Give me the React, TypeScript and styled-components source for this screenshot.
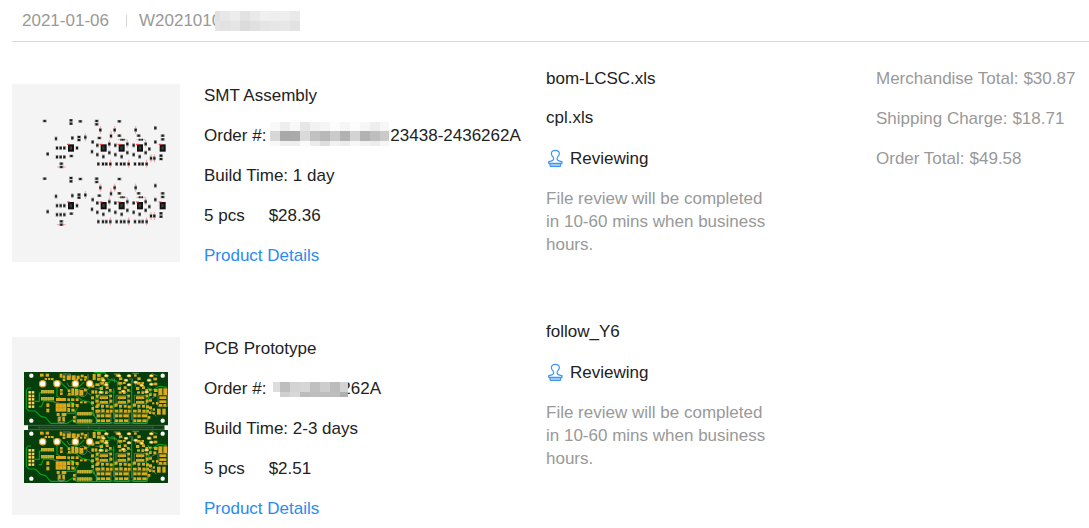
import React from "react";
import styled, { createGlobalStyle } from "styled-components";

const GlobalStyle = createGlobalStyle`
  * { box-sizing: border-box; }
  body {
    margin: 0;
    background: #fff;
    color: #222;
    font: 17px/20px "Liberation Sans", Arial, sans-serif;
  }
  h2, p, ul, dl, dd { margin: 0; padding: 0; font: inherit; }
`;

const Page = styled.main`
  padding-left: 12px;
`;

const OrderHeader = styled.header`
  display: flex;
  align-items: center;
  gap: 12px;
  height: 42px;
  padding: 1px 0 0 10px;
  border-bottom: 1px solid #d8d8de;
  color: #999;
`;

const OrderDate = styled.time`
  min-width: 92px;
`;

const Divider = styled.span`
  width: 1px;
  height: 12px;
  background: #d4d4d4;
`;

const Items = styled.div`
  display: flex;
  flex-direction: column;
  gap: 56px;
  padding-top: 27px;
`;

const Item = styled.article`
  display: grid;
  grid-template-columns: minmax(0, 534fr) minmax(0, 330fr) minmax(0, 213fr);
`;

const ItemMain = styled.div`
  display: flex;
  gap: 24px;
`;

const Thumb = styled.div`
  flex: none;
  width: 168px;
  height: 178px;
  margin-top: 15px;
  background: #f4f4f4;

  svg { display: block; }
`;

const Details = styled.div`
  display: flex;
  flex-direction: column;
  align-items: flex-start;
  gap: 20px;
  padding-top: 17px;
  white-space: nowrap;
`;

const OrderNumber = styled.p`
  display: flex;
  align-items: center;
  height: 20px;
`;

const Quantity = styled.p`
  display: flex;
  gap: 24px;
`;

const DetailLink = styled.a`
  color: #2a8bf0;
  text-decoration: none;
`;

const Files = styled.ul`
  display: flex;
  flex-direction: column;
  gap: 19px;
  list-style: none;
`;

const Status = styled.p`
  display: flex;
  align-items: center;
  gap: 4px;
  margin-top: 21px;
`;

const Note = styled.p`
  max-width: 230px;
  margin-top: 18px;
  color: #999;
  line-height: 23px;
`;

const Totals = styled.dl`
  display: flex;
  flex-direction: column;
  gap: 20px;
  color: #999;
  white-space: nowrap;
`;

const TotalLine = styled.div`
  display: flex;
  gap: 5px;
`;

const Redacted = styled.svg<{ $before: number; $after: number; $align: string }>`
  flex: none;
  position: relative;
  align-self: ${(p) => p.$align};
  margin-left: ${(p) => p.$before}px;
  margin-right: ${(p) => p.$after}px;
`;

type MosaicProps = {
  cols: number[];
  rows: number[];
  shades: number[][];
  before?: number;
  after?: number;
  align?: string;
};

function Mosaic({ cols, rows, shades, before = 0, after = 0, align = "center" }: MosaicProps) {
  const start = (list: number[], i: number) => list.slice(0, i).reduce((a, b) => a + b, 0);
  const width = start(cols, cols.length);
  const height = start(rows, rows.length);
  return (
    <Redacted
      $before={before}
      $after={after}
      $align={align}
      width={width}
      height={height}
      shapeRendering="crispEdges"
      aria-hidden="true"
    >
      {shades.map((line, r) =>
        line.map((v, c) =>
          v < 0 ? null : (
            <rect key={`${r}-${c}`} x={start(cols, c)} y={start(rows, r)} width={cols[c]} height={rows[r]} fill={`rgb(${v},${v},${v})`} />
          ),
        ),
      )}
    </Redacted>
  );
}

const tens = (n: number) => Array<number>(n).fill(10);

function StampIcon() {
  return (
    <svg width="20" height="20" viewBox="-6 -2 60 60" fill="none" stroke="#3d96f3" strokeWidth="3.6" strokeLinejoin="round" aria-hidden="true">
      <path d="M17 27C17 21 10 19 10 12C10 6 15 2 22 2S34 6 34 12C34 19 27 21 27 27C27 34 34 34 42 36V41H2V36C10 34 17 34 17 27Z" />
      <path d="M5 42L7 50H37L39 42Z" fill="#b9dafb" />
    </svg>
  );
}

type Point = [number, number];
type Box = [number, number, number, number];

const flatParts: Point[] = [
  [134, 153], [213, 151], [213, 161], [241, 154], [290, 153], [290, 163], [358, 154], [298, 204], [358, 197],
  [416, 197], [214, 258], [237, 201], [237, 210], [488, 197], [488, 208], [483, 257], [483, 267], [184, 281], [184, 291],
];
const tallParts: Point[] = [
  [301, 180], [344, 180], [407, 180], [466, 174], [168, 206], [217, 204], [256, 202], [333, 198], [278, 216],
  [466, 216], [171, 234], [182, 234], [193, 234], [231, 234], [292, 226], [328, 222], [346, 226], [382, 222],
  [401, 226], [437, 222], [448, 237], [276, 245], [143, 252], [171, 261], [182, 261], [193, 261], [292, 254],
  [328, 248], [346, 254], [382, 248], [401, 254], [437, 248], [310, 260], [365, 260], [419, 260], [295, 282],
  [309, 282], [319, 282], [331, 282], [350, 282], [363, 282], [373, 282], [386, 282], [405, 282], [418, 282],
  [428, 282], [440, 282], [453, 265], [463, 265],
];
const chips: Point[] = [[213, 234], [311, 234], [365, 234], [420, 234], [488, 234]];
const redTall: Point[] = [
  [301, 180], [344, 180], [407, 180], [256, 202], [333, 195], [328, 221], [382, 221], [437, 221], [331, 281],
  [386, 281], [440, 281], [453, 265], [463, 265],
];
const redFlat: Point[] = [[184, 291], [367, 209], [422, 209]];

function AssemblyHalf() {
  return (
    <g>
      {redTall.map(([x, y]) => (
        <path key={`${x}${y}`} d={`M${x} ${y - 12}V${y + 12}`} stroke="#ff8b8b" strokeWidth="2.4" />
      ))}
      {redFlat.map(([x, y]) => (
        <path key={`${x}${y}`} d={`M${x - 13} ${y}H${x + 13}`} stroke="#ff8b8b" strokeWidth="2.4" />
      ))}
      {flatParts.map(([x, y]) => (
        <g key={`${x}${y}`}>
          <rect x={x - 6} y={y - 4} width="12" height="8" fill="#8a8a8a" />
          <rect x={x - 3} y={y - 3} width="6" height="6" fill="#191919" />
        </g>
      ))}
      {tallParts.map(([x, y]) => (
        <g key={`${x}${y}`}>
          <rect x={x - 4} y={y - 6} width="8" height="12" fill="#8a8a8a" />
          <rect x={x - 3} y={y - 3} width="6" height="6" fill="#191919" />
        </g>
      ))}
      {redFlat.slice(1).map(([x, y]) => (
        <path key={x} d={`M${x - 6} ${y}h4M${x - 1} ${y}h3M${x + 3} ${y}h4`} stroke="#222" strokeWidth="6" />
      ))}
      {chips.map(([x, y]) => (
        <g key={x}>
          <rect x={x - 9} y={y - 11} width="18" height="22" fill="#111" />
          <rect x={x - 4} y={y - 5} width="7" height="10" fill="#3b3b3b" />
          <path d={`M${x - 12} ${y - 11}h9`} stroke="#ff3434" strokeWidth="3" />
        </g>
      ))}
    </g>
  );
}

function AssemblyDrawing() {
  return (
    <svg width="168" height="178" viewBox="36 42 504 534" role="img" aria-label="SMT assembly preview">
      <AssemblyHalf />
      <g transform="translate(0 173)">
        <AssemblyHalf />
      </g>
    </svg>
  );
}

const pads: Box[] = [
  [120, 131, 11, 9], [137, 131, 10, 9], [179, 131, 8, 12], [188, 136, 8, 9], [188, 146, 8, 7], [200, 136, 12, 14],
  [215, 136, 12, 14], [230, 137, 9, 10], [242, 134, 9, 8], [253, 138, 8, 8], [278, 132, 9, 18], [291, 131, 11, 9],
  [291, 143, 11, 9], [134, 144, 7, 6], [144, 144, 7, 6], [153, 144, 8, 6], [228, 146, 7, 6], [240, 146, 7, 6],
  [252, 146, 7, 6], [180, 177, 8, 8], [180, 187, 8, 8], [203, 178, 8, 8], [214, 175, 8, 20], [204, 188, 8, 8],
  [224, 177, 11, 19], [238, 180, 12, 17], [252, 176, 8, 8], [139, 220, 9, 11], [139, 236, 9, 11], [168, 204, 30, 9],
  [167, 220, 32, 25], [202, 205, 8, 8], [213, 205, 10, 8], [201, 220, 10, 11], [214, 218, 8, 14], [202, 234, 8, 12],
  [214, 236, 10, 9], [227, 205, 9, 8], [227, 222, 9, 9], [170, 249, 9, 9], [185, 249, 14, 9], [175, 260, 7, 14],
  [187, 260, 7, 14], [240, 214, 8, 6], [252, 214, 8, 6], [219, 258, 8, 8], [219, 269, 8, 8], [274, 164, 9, 9],
  [274, 181, 8, 10], [284, 181, 8, 10], [273, 199, 9, 9], [273, 214, 9, 9], [274, 231, 8, 9], [286, 160, 12, 8],
  [287, 194, 8, 9], [286, 209, 10, 9], [286, 226, 10, 8], [286, 239, 10, 9], [446, 176, 9, 6], [447, 190, 8, 8],
  [460, 143, 11, 8], [461, 158, 11, 8], [462, 177, 11, 9], [460, 190, 9, 9], [447, 208, 9, 7], [456, 217, 7, 6],
  [447, 229, 9, 9], [458, 235, 7, 7], [468, 216, 7, 8], [475, 175, 12, 20], [490, 175, 12, 20], [478, 199, 21, 8],
  [478, 211, 21, 8], [477, 222, 10, 8], [490, 222, 9, 8], [471, 236, 11, 18], [487, 236, 10, 18], [447, 244, 7, 8],
  [443, 258, 8, 8], [457, 247, 8, 6],
];
const channelPads: Box[] = [
  [-8, 142, 10, 8], [-10, 156, 12, 8], [-12, 171, 10, 9], [4, 156, 8, 6], [6, 169, 9, 8], [-9, 184, 9, 7],
  [4, 184, 8, 8], [16, 177, 8, 8], [17, 194, 8, 8], [-12, 199, 25, 8], [-12, 213, 25, 8], [17, 209, 9, 9],
  [-22, 221, 10, 9], [-8, 225, 9, 8], [6, 225, 9, 8], [18, 226, 9, 9], [-21, 239, 11, 8], [-7, 238, 10, 9],
  [7, 239, 10, 9], [19, 239, 8, 9], [-20, 253, 10, 9], [-8, 253, 10, 9], [5, 253, 16, 9], [-20, 268, 9, 8],
  [-9, 268, 13, 8], [7, 268, 13, 8], [-18, 133, 8, 7],
];
const brightPads: Point[] = [
  [319, 137], [387, 137], [454, 137], [310, 151], [378, 151], [447, 151], [319, 164], [387, 164], [454, 163],
  [302, 187], [370, 184], [440, 186], [357, 137], [407, 157], [425, 166],
];
const strips: Point[] = [[123, 180], [123, 201], [232, 246], [232, 268]];

function BoardHalf() {
  return (
    <g>
      <rect x="72" y="126" width="432" height="159" fill="#063f0b" />
      <g fill="none" stroke="#05a01a" strokeWidth="3.4" strokeLinejoin="round">
        <path d="M93 174H84L79 180V236L87 243H105L123 259L137 263L152 280H202L218 270L231 281H290" />
        <path d="M104 214H118V190L128 185H161M117 230H124L131 212L164 215M163 161L159 149M178 151L190 165L204 178M171 173V199L180 204" />
        <path d="M200 196H228L247 212L269 216L280 229V251M207 215L235 229L223 250H199M253 184L266 176L276 159M252 156L239 169L224 177" />
        <path d="M281 128H315L325 149L349 153L363 170M285 209L297 195L307 169L330 155M275 244L289 267V279H437L450 263" />
        <path d="M341 175V266M395 151V270M443 171L454 190L440 213V250M326 186H345M380 177L397 188M336 230H349M390 231H403M457 181L478 169L501 172" />
      </g>
      <g fill="none" stroke="#9aad97" strokeWidth="1.5">
        <path d="M161 217H176M201 159L208 171M174 259V277H194V259M209 169H223M262 188L274 196M228 245V279M280 258L285 250M286 175H300" />
        <circle cx="184" cy="270" r="10" />
        <circle cx="248" cy="187" r="13" />
        {[0, 54, 109].map((x) => (
          <path key={x} transform={`translate(${x} 0)`} d="M298 169V159L306 151M316 181L329 190M294 196V222H330V196ZM290 249H333V280H290ZM306 224V248M333 147H344V158" />
        ))}
        <path d="M474 195V230H502V195ZM443 229L469 259M449 248H466M446 209L469 198M455 130L473 138" />
      </g>
      <path d="M189 132H211V145M264 133V151M341 132H360M397 130H417" fill="none" stroke="#a0a899" strokeWidth="2" />
      {strips.map(([x, y]) => (
        <g key={`${x}${y}`}>
          <rect x={x} y={y} width={x < 200 ? 39 : 45} height="10" fill="#a1a221" />
          {[0, 1, 2, 3, 4, 5].map((i) => (
            <rect key={i} x={x + i * 7} y={y} width="4" height="10" fill="#c6b13b" />
          ))}
        </g>
      ))}
      {pads.map(([x, y, w, h]) => (
        <rect key={`${x}-${y}`} x={x} y={y} width={w} height={h} fill="#dba91e" />
      ))}
      {[311, 365, 420].map((cx) =>
        channelPads.map(([x, y, w, h]) => (
          <rect key={`${cx}${x}-${y}`} x={cx + x} y={y} width={w} height={h} fill="#d8aa20" />
        )),
      )}
      <path d="M177 220V245M188 220V245M167 233H199M305 198V222M315 198V222M359 198V222M369 198V222M414 198V222M424 198V222" stroke="#b28b16" strokeWidth="1.5" />
      {brightPads.map(([x, y]) => (
        <g key={`${x}${y}`}>
          <ellipse cx={x} cy={y} rx="7" ry="4.5" fill="#e3b235" />
          <ellipse cx={x} cy={y} rx="4" ry="2.5" fill="#fff3bf" />
        </g>
      ))}
      {[187, 198, 208, 219, 230].map((y) => (
        <g key={y}>
          <rect x="85" y={y - 4} width="8" height="8" fill="#e2bb45" />
          <rect x="95" y={y - 4} width="8" height="8" fill="#e2bb45" />
          <path d={`M87 ${y}h4M97 ${y}h4`} stroke="#fff3bf" strokeWidth="3" />
        </g>
      ))}
      {[128, 171, 226, 269].map((x) => (
        <circle key={x} cx={x} cy="161" r="9.5" fill="#fff" stroke="#e3a329" strokeWidth="3.5" />
      ))}
      {[[94, 137], [488, 137], [94, 272], [488, 272]].map(([x, y]) => (
        <circle key={`${x}${y}`} cx={x} cy={y} r="6.5" fill="#fff" />
      ))}
    </g>
  );
}

function BoardDrawing() {
  return (
    <svg width="168" height="178" viewBox="36 21 504 534" role="img" aria-label="PCB prototype preview">
      <BoardHalf />
      <g transform="translate(0 174)">
        <BoardHalf />
      </g>
      <rect x="84" y="285" width="410" height="15" fill="#123f17" />
      <path d="M72 286H504M84 299H494" stroke="#5f7f60" strokeWidth="2" />
      <path d="M117 287V299M265 287V299M297 287V299M459 287V299M117 292H459" stroke="#527254" strokeWidth="1.5" />
      <rect x="72" y="287" width="12" height="12" fill="#fff" />
      <rect x="494" y="287" width="10" height="12" fill="#fff" />
    </svg>
  );
}

function Review({ files }: { files: string[] }) {
  return (
    <section>
      <Files>
        {files.map((file) => (
          <li key={file}>{file}</li>
        ))}
      </Files>
      <Status>
        <StampIcon />
        Reviewing
      </Status>
      <Note>File review will be completed in 10-60 mins when business hours.</Note>
    </section>
  );
}

const totals = [
  ["Merchandise Total:", "$30.87"],
  ["Shipping Charge:", "$18.71"],
  ["Order Total:", "$49.58"],
];

export default function App() {
  return (
    <>
      <GlobalStyle />
      <Page>
        <OrderHeader>
          <OrderDate dateTime="2021-01-06">2021-01-06</OrderDate>
          <Divider />
          <OrderNumber>
            W2021010
            <Mosaic
              before={-6}
              cols={[5, ...tens(8)]}
              rows={[10, 10]}
              shades={[
                [225, 231, 236, 226, 233, 239, 238, 238, 233],
                [229, 226, 229, 219, 224, 229, 230, 231, 226],
              ]}
            />
          </OrderNumber>
        </OrderHeader>
        <Items>
          <Item>
            <ItemMain>
              <Thumb>
                <AssemblyDrawing />
              </Thumb>
              <Details>
                <h2>SMT Assembly</h2>
                <OrderNumber>
                  Order #:
                  <Mosaic
                    before={4}
                    after={1}
                    align="flex-end"
                    cols={[...tens(11), 9]}
                    rows={[9, 10, 5]}
                    shades={[
                      [249, 238, 248, 230, 241, 245, 252, 246, 252, 246, 238, 247],
                      [215, 169, 170, 218, 193, 184, 202, 178, 211, 178, 190, 202],
                      [248, 239, 238, 250, 235, 222, 241, 236, 247, 241, 237, 246],
                    ]}
                  />
                  23438-2436262A
                </OrderNumber>
                <p>Build Time: 1 day</p>
                <Quantity>
                  <span>5 pcs</span>
                  <span>$28.36</span>
                </Quantity>
                <DetailLink href="#smt-assembly">Product Details</DetailLink>
              </Details>
            </ItemMain>
            <Review files={["bom-LCSC.xls", "cpl.xls"]} />
            <Totals>
              {totals.map(([label, amount]) => (
                <TotalLine key={label}>
                  <dt>{label}</dt>
                  <dd>{amount}</dd>
                </TotalLine>
              ))}
            </Totals>
          </Item>
          <Item>
            <ItemMain>
              <Thumb>
                <BoardDrawing />
              </Thumb>
              <Details>
                <h2>PCB Prototype</h2>
                <OrderNumber>
                  Order #:
                  <Mosaic
                    before={7}
                    after={-7}
                    cols={[7, ...tens(6), 8]}
                    rows={[10, 5]}
                    shades={[
                      [221, 190, 211, 214, 192, 205, 188, 211],
                      [-1, 207, 215, 188, 190, 189, 189, 176],
                    ]}
                  />
                  262A
                </OrderNumber>
                <p>Build Time: 2-3 days</p>
                <Quantity>
                  <span>5 pcs</span>
                  <span>$2.51</span>
                </Quantity>
                <DetailLink href="#pcb-prototype">Product Details</DetailLink>
              </Details>
            </ItemMain>
            <Review files={["follow_Y6"]} />
          </Item>
        </Items>
      </Page>
    </>
  );
}
